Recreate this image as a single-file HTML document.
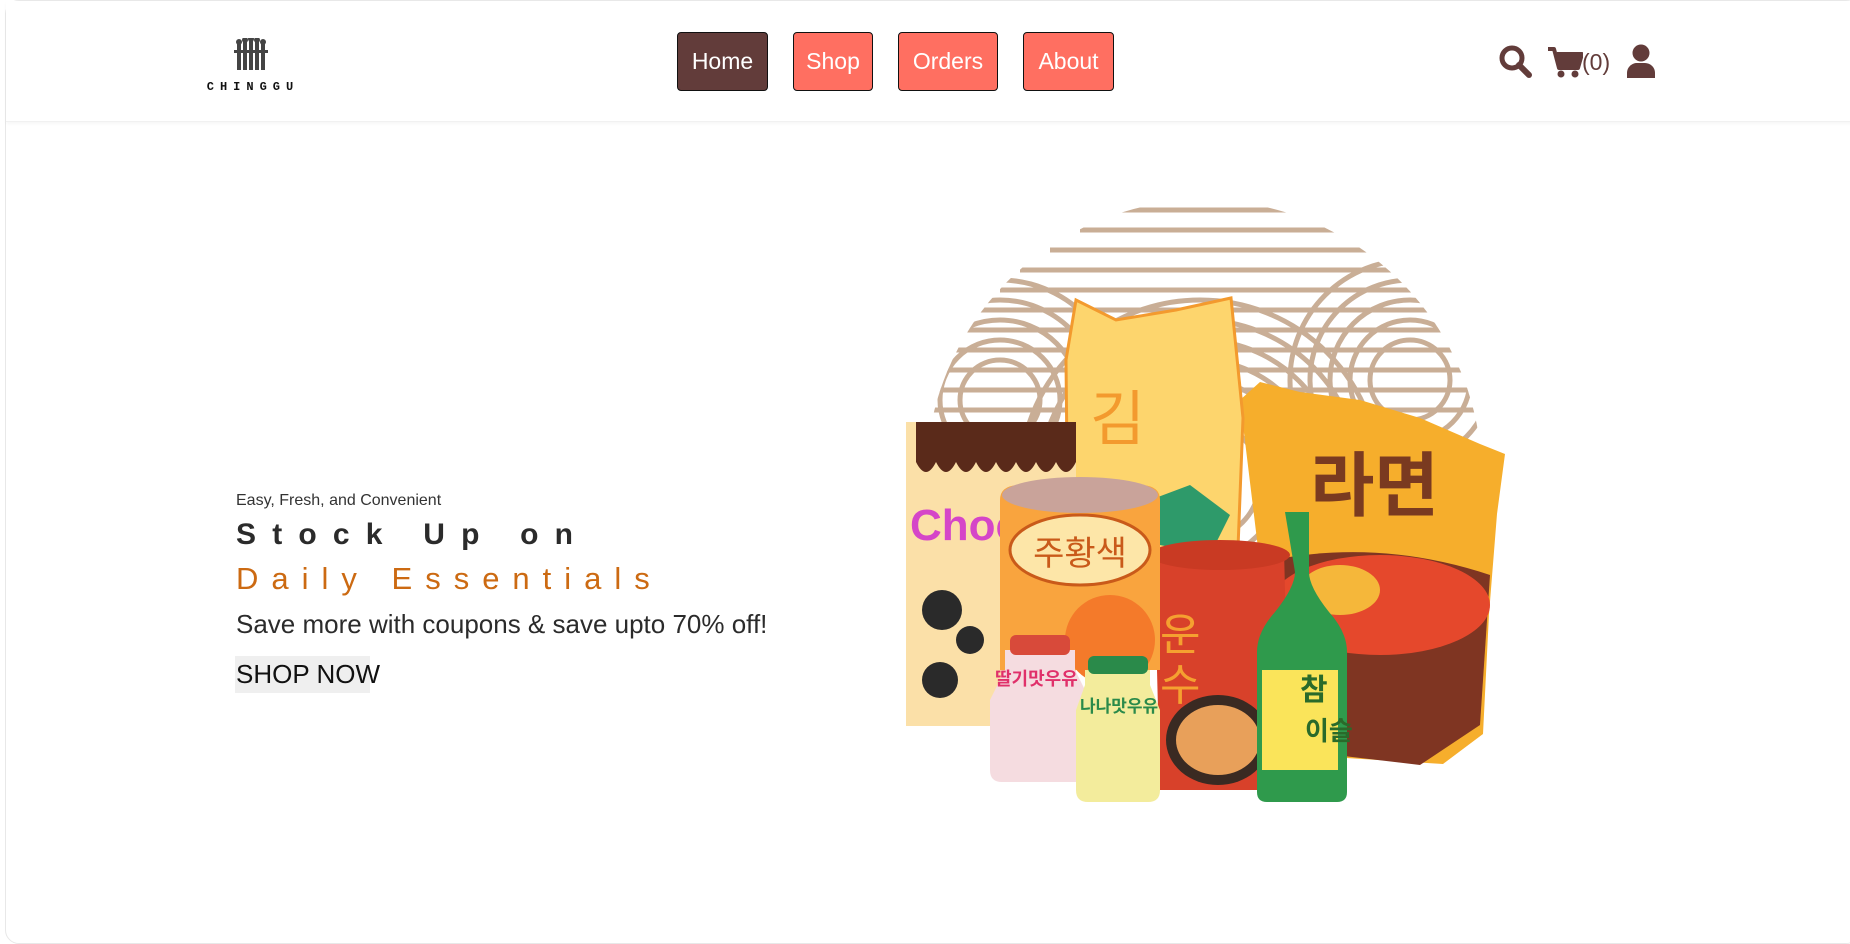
<!DOCTYPE html>
<html><head><meta charset="utf-8"><style>
*{margin:0;padding:0;box-sizing:border-box}
body{width:1850px;height:934px;background:#fff;font-family:"Liberation Sans","DejaVu Sans",sans-serif;position:relative;overflow:hidden;color:#222}
.frame{position:absolute;left:5px;top:0;right:-10px;bottom:-10px;border:1px solid #e8e8e8;border-radius:14px}
.header{position:absolute;left:6px;top:1px;width:1850px;height:121px;background:#fff;border-bottom:1px solid #f1f1f1;box-shadow:0 2px 3px rgba(0,0,0,.03)}
.btn{position:absolute;top:32px;height:59px;border:1px solid #111;border-radius:4px;background:#ff6f61;color:#fff;font-size:23px;display:flex;align-items:center;justify-content:center}
.t{position:absolute;left:236px;white-space:nowrap}
</style></head><body>
<div class="frame"></div>
<div class="header"></div>
<!-- logo -->
<svg style="position:absolute;left:205px;top:38px" width="96" height="56" viewBox="0 0 96 56">
<g fill="#444"><rect x="32" y="6" width="4" height="26"/><rect x="38" y="3" width="4" height="29"/><rect x="44" y="2" width="4" height="30"/><rect x="50" y="3" width="4" height="29"/><rect x="56" y="6" width="4" height="26"/>
<circle cx="34" cy="4" r="3"/><circle cx="40" cy="2" r="3"/><circle cx="46" cy="1" r="3"/><circle cx="52" cy="2" r="3"/><circle cx="58" cy="4" r="3"/>
<rect x="29" y="12" width="34" height="3"/></g>
<text x="48" y="52" text-anchor="middle" font-family="Liberation Mono,monospace" font-weight="bold" font-size="12" letter-spacing="6" fill="#111">CHINGGU</text>
</svg>
<div class="btn" style="left:677px;width:91px;background:#623c3a">Home</div>
<div class="btn" style="left:793px;width:80px">Shop</div>
<div class="btn" style="left:898px;width:100px">Orders</div>
<div class="btn" style="left:1023px;width:91px">About</div>
<!-- icons -->
<svg style="position:absolute;left:1499px;top:45px" width="34" height="34" viewBox="0 0 34 34"><circle cx="13" cy="13" r="10" fill="none" stroke="#623c3a" stroke-width="5"/><path d="M20 20L30 30" stroke="#623c3a" stroke-width="6" stroke-linecap="round"/></svg>
<svg style="position:absolute;left:1547px;top:45px" width="36" height="34" viewBox="0 0 36 34"><path d="M1 4h6l5 19h19l4-14H10" fill="none" stroke="#623c3a" stroke-width="4" stroke-linejoin="round"/><path d="M10 9h24l-4 12H13z" fill="#623c3a"/><circle cx="14" cy="29" r="3.5" fill="#623c3a"/><circle cx="28" cy="29" r="3.5" fill="#623c3a"/></svg>
<div style="position:absolute;left:1582px;top:49px;font-size:23px;color:#623c3a">(0)</div>
<svg style="position:absolute;left:1626px;top:44px" width="30" height="34" viewBox="0 0 30 34"><circle cx="15" cy="9" r="8.5" fill="#623c3a"/><path d="M1 34v-5c0-6 5-10 10-10h8c5 0 10 4 10 10v5z" fill="#623c3a"/></svg>

<div class="t" style="top:492px;font-size:16px;color:#333">Easy, Fresh, and Convenient</div>
<div class="t" style="top:518px;font-size:30px;font-weight:bold;letter-spacing:16.2px;color:#2b2b2b">Stock Up on</div>
<div class="t" style="top:561px;font-size:31px;letter-spacing:13px;color:#cc6a12">Daily Essentials</div>
<div class="t" style="top:609px;font-size:26px;color:#2b2b2b">Save more with coupons &amp; save upto 70% off!</div>
<div class="t" style="top:656px;left:235px;width:135px;height:37px;background:#efefef;font-size:26px;color:#111;line-height:37px;padding-left:1px">SHOP NOW</div>

<svg style="position:absolute;left:0;top:0" width="1850" height="934" viewBox="0 0 1850 934">
<defs><clipPath id="c"><circle cx="1204" cy="478" r="278"/></clipPath></defs>
<g clip-path="url(#c)" fill="none" stroke="#c9ae96" stroke-width="5">
<g><circle cx="1200" cy="480" r="60"/><circle cx="1200" cy="480" r="80"/><circle cx="1200" cy="480" r="100"/><circle cx="1200" cy="480" r="120"/><circle cx="1200" cy="480" r="140"/><circle cx="1200" cy="480" r="160"/><circle cx="1200" cy="480" r="180"/></g>
<g><circle cx="1000" cy="400" r="40"/><circle cx="1000" cy="400" r="60"/><circle cx="1000" cy="400" r="80"/><circle cx="1000" cy="400" r="100"/><circle cx="1000" cy="400" r="120"/></g>
<g><circle cx="1410" cy="380" r="40"/><circle cx="1410" cy="380" r="60"/><circle cx="1410" cy="380" r="80"/><circle cx="1410" cy="380" r="100"/><circle cx="1410" cy="380" r="120"/></g>
<path d="M1100 210h300M1080 230h300M1050 250h360M1020 270h400M1000 290h440M980 310h480M960 330h500M950 350h520M940 370h540M930 390h560M930 410h560"/>
</g>
<path d="M1240 400l20-18 40 10 60 8 60 18 60 26 25 10 -8 60 -8 100 -6 120 -40 30 -160 -10z" fill="#f6ae2c"/>
<text x="1310" y="510" font-size="70" fill="#7a3a20" font-family="Noto Sans CJK KR,sans-serif" font-weight="bold">라면</text>
<path d="M1250 565q120 -30 240 10l-10 150 -60 40 -170 -20z" fill="#7f3522"/>
<ellipse cx="1380" cy="605" rx="110" ry="50" fill="#e5482c"/>
<ellipse cx="1340" cy="590" rx="40" ry="25" fill="#f5b73a"/>
<path d="M1066 360l10-60 40 20 60-10 55-12 12 120 -5 130 -170 10z" fill="#fdd56d" stroke="#f39a2e" stroke-width="3"/>
<text x="1090" y="440" font-size="60" fill="#f39a2e" font-family="Noto Sans CJK KR,sans-serif">김</text>
<path d="M1150 500l40-15 40 30 -20 40 -50 -10z" fill="#2e9a6a"/>
<rect x="906" y="422" width="170" height="304" fill="#fbe0a8"/>
<path d="M906 422h170v40q-10 20-20 0q-10 20-20 0q-10 20-20 0q-10 20-20 0q-10 20-20 0q-10 20-20 0q-10 20-20 0q-10 20-20 0v-40z" fill="#5a2a1a"/>
<text x="910" y="540" font-size="44" fill="#d545c8" font-weight="bold">Choc</text>
<circle cx="942" cy="610" r="20" fill="#2a2a2a"/><circle cx="970" cy="640" r="14" fill="#2a2a2a"/><circle cx="940" cy="680" r="18" fill="#2a2a2a"/>
<path d="M1154 550h130l6 240h-130z" fill="#d8412a"/>
<ellipse cx="1220" cy="555" rx="70" ry="15" fill="#c93a23"/>
<text x="1160" y="650" font-size="44" fill="#f5a030" font-family="Noto Sans CJK KR,sans-serif">운</text>
<text x="1160" y="700" font-size="44" fill="#f5a030" font-family="Noto Sans CJK KR,sans-serif">수</text>
<ellipse cx="1218" cy="740" rx="52" ry="45" fill="#3a2a22"/><ellipse cx="1218" cy="740" rx="42" ry="35" fill="#e8a05a"/>
<path d="M1000 500q0-15 20-15h120q20 0 20 15v170h-160z" fill="#f9a43e"/>
<ellipse cx="1080" cy="495" rx="78" ry="18" fill="#c9a39a"/>
<ellipse cx="1080" cy="550" rx="70" ry="35" fill="#fde6a8" stroke="#c95a1a" stroke-width="3"/>
<text x="1080" y="565" text-anchor="middle" font-size="34" fill="#c95a1a" font-family="Noto Sans CJK KR,sans-serif">주황색</text>
<circle cx="1110" cy="640" r="45" fill="#f47a2a"/>
<path d="M1005 650h70v20l15 30v70q0 12-12 12h-76q-12 0-12-12v-70l15-30z" fill="#f5dce0"/>
<rect x="1010" y="635" width="60" height="20" rx="6" fill="#d84a3a"/>
<text x="995" y="685" font-size="18" fill="#e0306a" font-family="Noto Sans CJK KR,sans-serif" font-weight="bold">딸기맛우유</text>
<path d="M1085 670h65v15l10 25v80q0 12-12 12h-60q-12 0-12-12v-80l9-25z" fill="#f3ec9c"/>
<rect x="1088" y="656" width="60" height="18" rx="6" fill="#2a8a4a"/>
<text x="1080" y="712" font-size="17" fill="#2a8a4a" font-family="Noto Sans CJK KR,sans-serif" font-weight="bold">나나맛우유</text>
<path d="M1285 512h24v60q0 15 20 40q18 20 18 40v140q0 10-10 10h-70q-10 0-10-10v-140q0-20 18-40q20-25 20-40z" fill="#2f9a4c"/>
<rect x="1262" y="670" width="76" height="100" fill="#fae45a"/>
<text x="1300" y="700" font-size="30" fill="#2a6a2a" font-family="Noto Sans CJK KR,sans-serif" font-weight="bold">참</text>
<text x="1305" y="740" font-size="26" fill="#2a6a2a" font-family="Noto Sans CJK KR,sans-serif" font-weight="bold">이슬</text>
</svg>
</body></html>
